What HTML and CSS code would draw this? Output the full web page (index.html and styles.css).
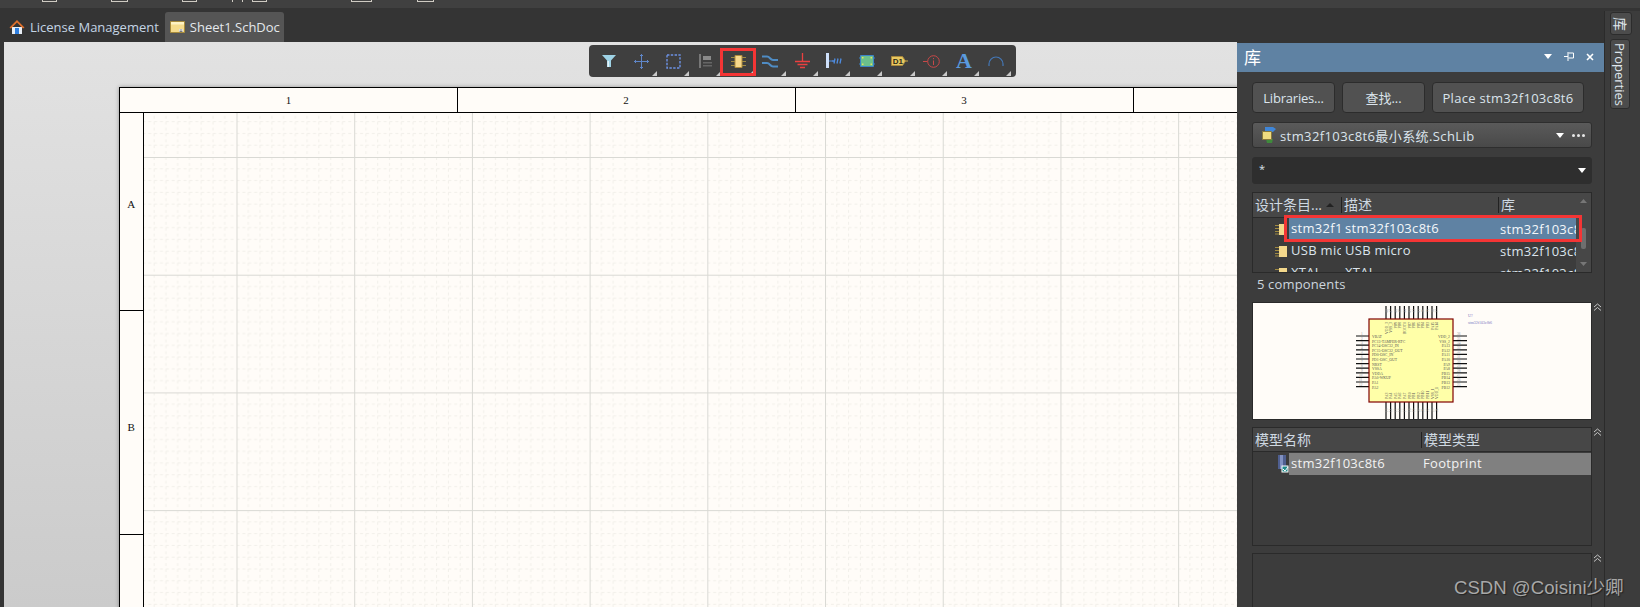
FILE: index.html
```html
<!DOCTYPE html>
<html>
<head>
  <title>Sheet1.SchDoc</title>
  <link rel="stylesheet" href="styles.css">
</head>
<body>
  <div class="topbar">
    <span class="stub stub-1"></span>
    <span class="stub stub-2"></span>
    <span class="stub stub-3"></span>
    <span class="stub stub-4"></span>
    <span class="stub stub-5"></span>
    <span class="stub stub-6"></span>
    <span class="stub stub-7"></span>
  </div>

  <div class="app">
    <div class="editor">
      <div class="tabs">
        <div class="tab">
          <svg class="tab-icon" width="16" height="16" viewBox="0 0 16 16">
            <path d="M3 8v7h10V8z" fill="#e8eef4"/>
            <path d="M6 9h4v6H6z" fill="#2f7fe0"/>
            <path d="M0.5 8.5 8 1l7.5 7.5-1.5 1L8 3.5 2 9.5z" fill="#e0702c"/>
          </svg>
          License Management
        </div>
        <div class="tab tab-active">
          <svg class="tab-icon" width="15" height="12" viewBox="0 0 15 12">
            <path d="M0.5 0.5h14v11H0.5z" fill="#f6dc8c" stroke="#a88b3c"/>
            <path d="M1 1h13v2.5H1z" fill="#fff3c4"/>
            <path d="M9 8h4v3H9z" fill="#fff"/>
            <path d="M9.5 9h3M9.5 10.5h3" stroke="#777"/>
          </svg>
          Sheet1.SchDoc
        </div>
      </div>

      <div class="canvas">
        <div class="toolbar">
          <div class="tool tool-plain">
            <svg width="14" height="12" viewBox="0 0 14 12"><path d="M0 0h14L9 5.5V12H5V5.5z" fill="#9fd3e6"/><path d="M5.5 6h1.5v6H5.5z" fill="#e4f4fa"/></svg>
          </div>
          <div class="tool">
            <svg width="15" height="15" viewBox="0 0 15 15"><path d="M7.5 0v15M0 7.5h15M6 1.5h3M6 13.5h3M1.5 6v3M13.5 6v3" stroke="#5f86c8" fill="none"/></svg>
          </div>
          <div class="tool">
            <svg width="15" height="15" viewBox="0 0 15 15"><rect x="1" y="1" width="13" height="13" fill="none" stroke="#6d93e6" stroke-width="1.4" stroke-dasharray="2.4 1.4"/></svg>
          </div>
          <div class="tool">
            <svg width="13" height="14" viewBox="0 0 13 14"><path d="M0 0h2v14H0z" fill="#777"/><path d="M4 2h8v4H4z" fill="#8a8a8a"/><path d="M4 8h9v1.5H4zM4 11h9v1.5H4z" fill="#666"/></svg>
          </div>
          <div class="tool tool-marked">
            <svg width="15" height="13" viewBox="0 0 15 13"><path d="M4 .5h7v12H4z" fill="#f8d98c" stroke="#b08c3c"/><path d="M0 2.5h4M0 6.5h4M0 10.5h4M11 2.5h4M11 6.5h4M11 10.5h4" stroke="#a08a40"/></svg>
          </div>
          <div class="tool">
            <svg width="17" height="13" viewBox="0 0 17 13"><path d="M0 1.5h5c3 0 3 3.5 6 3.5h5M0 8h5c3 0 3 3.5 6 3.5h5" fill="none" stroke="#4f8cc4" stroke-width="2"/></svg>
          </div>
          <div class="tool">
            <svg width="15" height="16" viewBox="0 0 15 16"><path d="M7.5 0v8M0 8.5h15M2.5 11.5h10M5 14.5h5" stroke="#ec4040" fill="none" stroke-width="1.3"/></svg>
          </div>
          <div class="tool">
            <svg width="17" height="16" viewBox="0 0 17 16"><path d="M0 0h3v15H0z" fill="#cfe0fa"/><path d="M3 8h3" stroke="#4f8ce0"/><path d="M8 10.5 9 5.5M11 10.5 12 5.5M14 10.5 15 5.5M6 8h2" stroke="#4f8ce0" stroke-width="1.3" fill="none"/></svg>
          </div>
          <div class="tool">
            <svg width="16" height="12" viewBox="0 0 16 12"><path d="M1.5 .5h13v11h-13z" fill="#6cc08c" stroke="#3c84c8"/><path d="M3 2h1.5v1.5H3zM3 8.5h1.5V10H3zM11.5 2H13v1.5h-1.5zM11.5 8.5H13V10h-1.5z" fill="#e8e060"/><path d="M0 3h1.5M0 9h1.5M14.5 3H16M14.5 9H16" stroke="#3c84c8"/></svg>
          </div>
          <div class="tool">
            <svg width="17" height="10" viewBox="0 0 17 10"><path d="M.5.5h11l3 4.5-3 4.5H.5z" fill="#e8c860" stroke="#a8883c"/><path d="M14.5 5H17" stroke="#c8a848"/><text x="1.8" y="8" class="tag-text">D1</text></svg>
          </div>
          <div class="tool">
            <svg width="17" height="13" viewBox="0 0 17 13"><circle cx="10.5" cy="6.5" r="5.8" fill="none" stroke="#c84848"/><path d="M0 6.5h4.5M10.5 5.5v4.5M10.5 3v1.2" stroke="#c84848" fill="none"/></svg>
          </div>
          <div class="tool"><span class="tool-letter">A</span></div>
          <div class="tool">
            <svg width="16" height="10" viewBox="0 0 16 10"><path d="M1 10V8a7 7 0 0 1 14 0v2" fill="none" stroke="#4478b8" stroke-width="1.2"/></svg>
          </div>
        </div>

        <div class="sheet">
          <div class="sheet-cols">
            <div class="sheet-col">1</div>
            <div class="sheet-col">2</div>
            <div class="sheet-col">3</div>
            <div class="sheet-col"></div>
          </div>
          <div class="sheet-body">
            <div class="sheet-rows">
              <div class="sheet-row row-a">A</div>
              <div class="sheet-row row-b">B</div>
              <div class="sheet-row"></div>
            </div>
            <div class="sheet-area">
              <svg class="sheet-grid" width="100%" height="100%">
                <defs>
                  <pattern id="grid" width="118" height="118" patternUnits="userSpaceOnUse" patternTransform="translate(92.5 44) scale(.9975)">
                    <path d="M0 11.8H118M0 23.6H118M0 35.4H118M0 47.2H118M0 59H118M0 70.8H118M0 82.6H118M0 94.4H118M0 106.2H118M11.8 0V118M23.6 0V118M35.4 0V118M47.2 0V118M59 0V118M70.8 0V118M82.6 0V118M94.4 0V118M106.2 0V118" stroke="#f1efe9" stroke-dasharray="3 2.9" fill="none"/>
                    <path d="M0 .5H118M.5 0V118" stroke="#d9d9d4" fill="none"/>
                  </pattern>
                </defs>
                <rect width="100%" height="100%" fill="url(#grid)"/>
              </svg>
            </div>
          </div>
        </div>
      </div>
    </div>

    <div class="panel">
      <div class="panel-title">
        <span class="panel-name">库</span>
        <span class="panel-controls">
          <svg width="8" height="5" viewBox="0 0 8 5"><path d="M0 0h8L4 5z" fill="#fff"/></svg>
          <svg width="10" height="9" viewBox="0 0 10 9"><path d="M0 4.5h4M4.5 1h5v5h-5M4 0v9" stroke="#fff" fill="none"/></svg>
          <svg width="8" height="8" viewBox="0 0 8 8"><path d="M1 1l6 6M7 1 1 7" stroke="#fff" stroke-width="1.6"/></svg>
        </span>
      </div>

      <div class="panel-body">
        <div class="btn-row">
          <div class="btn btn-small btn-libs">Libraries...</div>
          <div class="btn btn-small">查找...</div>
          <div class="btn btn-wide">Place stm32f103c8t6</div>
        </div>

        <div class="select select-lib">
          <svg class="select-icon" width="14" height="16" viewBox="0 0 14 16">
            <path d="M3 0h8l3 2-3 3H3z" fill="#3f86d8"/>
            <path d="M4 12h7l-1 4H5z" fill="#3f8a3c"/>
            <path d="M.5 4.5h9v8h-9z" fill="#f0dc80" stroke="#8a7a3c"/>
          </svg>
          <span class="select-text">stm32f103c8t6最小系统.SchLib</span>
          <svg class="select-arrow" width="8" height="5" viewBox="0 0 8 5"><path d="M0 0h8L4 5z" fill="#fff"/></svg>
          <span class="select-dots"><i></i><i></i><i></i></span>
        </div>

        <div class="select select-filter">
          <span class="select-text filter-star">*</span>
          <svg class="select-arrow" width="8" height="5" viewBox="0 0 8 5"><path d="M0 0h8L4 5z" fill="#fff"/></svg>
        </div>

        <div class="list list-lib">
          <div class="list-main">
            <div class="list-head head-lib">
              <div class="head-cell">设计条目...<svg class="sort" width="8" height="4" viewBox="0 0 8 4"><path d="M4 0l4 4H0z" fill="#222"/></svg></div>
              <div class="head-cell">描述</div>
              <div class="head-cell">库</div>
            </div>
            <div class="list-row">
              <svg class="comp-icon" width="12" height="11" viewBox="0 0 12 11"><path d="M4 0h8v11H4z" fill="#f3d88c"/><path d="M0 1.5h4M0 4.5h4M0 7.5h4M0 10h4" stroke="#a08a40"/></svg>
              <div class="row-cells cells-lib row-selected">
                <div class="cell">stm32f103c8t6</div>
                <div class="cell cell-desc">stm32f103c8t6</div>
                <div class="cell">stm32f103c8t6最小系统.SchLib</div>
              </div>
            </div>
            <div class="list-row">
              <svg class="comp-icon" width="12" height="11" viewBox="0 0 12 11"><path d="M4 0h8v11H4z" fill="#f3d88c"/><path d="M0 1.5h4M0 4.5h4M0 7.5h4M0 10h4" stroke="#a08a40"/></svg>
              <div class="row-cells cells-lib">
                <div class="cell">USB micro</div>
                <div class="cell cell-desc">USB micro</div>
                <div class="cell">stm32f103c8t6最小系统.SchLib</div>
              </div>
            </div>
            <div class="list-row">
              <svg class="comp-icon" width="12" height="11" viewBox="0 0 12 11"><path d="M4 0h8v11H4z" fill="#f3d88c"/><path d="M0 1.5h4M0 4.5h4M0 7.5h4M0 10h4" stroke="#a08a40"/></svg>
              <div class="row-cells cells-lib">
                <div class="cell">XTAL</div>
                <div class="cell cell-desc">XTAL</div>
                <div class="cell">stm32f103c8t6最小系统.SchLib</div>
              </div>
            </div>
          </div>
          <div class="scrollbar">
            <svg width="7" height="4" viewBox="0 0 7 4"><path d="M3.5 0 7 4H0z" fill="#777"/></svg>
            <div class="scroll-thumb"></div>
            <svg width="7" height="4" viewBox="0 0 7 4"><path d="M0 0h7L3.5 4z" fill="#777"/></svg>
          </div>
          <div class="mark-row"></div>
        </div>

        <div class="count">5 components</div>

        <div class="preview">
          <svg class="chevrons" width="9" height="8" viewBox="0 0 9 8"><path d="M1 4l3.5-3L8 4M1 7.5l3.5-3 3.5 3" fill="none" stroke="#c8c8c8"/></svg>
          <svg class="chip" width="338" height="116" viewBox="1 1 338 116">
            <path d="M104 34h13M104 38.6h13M104 43.2h13M104 47.8h13M104 52.4h13M104 57h13M104 61.6h13M104 66.2h13M104 70.8h13M104 75.4h13M104 80h13M104 84.6h13M201 34h14M201 38.6h14M201 43.2h14M201 47.8h14M201 52.4h14M201 57h14M201 61.6h14M201 66.2h14M201 70.8h14M201 75.4h14M201 80h14M201 84.6h14" stroke="#111" stroke-width="1.2"/>
            <path d="M134 4v13M138.6 4v13M143.2 4v13M147.8 4v13M152.4 4v13M157 4v13M161.6 4v13M166.2 4v13M170.8 4v13M175.4 4v13M180 4v13M184.6 4v13M134 100v18M138.6 100v18M143.2 100v18M147.8 100v18M152.4 100v18M157 100v18M161.6 100v18M166.2 100v18M170.8 100v18M175.4 100v18M180 100v18M184.6 100v18" stroke="#111" stroke-width="1.2"/>
            <rect x="117" y="17" width="84" height="83" fill="#ffffa8" stroke="#800000" stroke-width="1.2"/>
            <g class="pin-name">
              <text x="120" y="36">VBAT</text><text x="120" y="40.6">PC13-TAMPER-RTC</text><text x="120" y="45.2">PC14-OSC32_IN</text><text x="120" y="49.8">PC15-OSC32_OUT</text><text x="120" y="54.4">PD0-OSC_IN</text><text x="120" y="59">PD1-OSC_OUT</text><text x="120" y="63.6">NRST</text><text x="120" y="68.2">VSSA</text><text x="120" y="72.8">VDDA</text><text x="120" y="77.4">PA0-WKUP</text><text x="120" y="82">PA1</text><text x="120" y="86.6">PA2</text>
            </g>
            <g class="pin-name pin-end">
              <text x="198" y="36">VDD_2</text><text x="198" y="40.6">VSS_2</text><text x="198" y="45.2">PA13</text><text x="198" y="49.8">PA12</text><text x="198" y="54.4">PA11</text><text x="198" y="59">PA10</text><text x="198" y="63.6">PA9</text><text x="198" y="68.2">PA8</text><text x="198" y="72.8">PB15</text><text x="198" y="77.4">PB14</text><text x="198" y="82">PB13</text><text x="198" y="86.6">PB12</text>
            </g>
            <g class="pin-name pin-end" transform="rotate(-90)">
              <text x="-20" y="135.5">VDD_3</text><text x="-20" y="140.1">VSS_3</text><text x="-20" y="144.7">PB9</text><text x="-20" y="149.3">PB8</text><text x="-20" y="153.9">BOOT0</text><text x="-20" y="158.5">PB7</text><text x="-20" y="163.1">PB6</text><text x="-20" y="167.7">PB5</text><text x="-20" y="172.3">PB4</text><text x="-20" y="176.9">PB3</text><text x="-20" y="181.5">PA15</text><text x="-20" y="186.1">PA14</text>
            </g>
            <g class="pin-name" transform="rotate(-90)">
              <text x="-97" y="135.5">PA3</text><text x="-97" y="140.1">PA4</text><text x="-97" y="144.7">PA5</text><text x="-97" y="149.3">PA6</text><text x="-97" y="153.9">PA7</text><text x="-97" y="158.5">PB0</text><text x="-97" y="163.1">PB1</text><text x="-97" y="167.7">PB2</text><text x="-97" y="172.3">PB10</text><text x="-97" y="176.9">PB11</text><text x="-97" y="181.5">VSS_1</text><text x="-97" y="186.1">VDD_1</text>
            </g>
            <g class="pin-num pin-end" transform="rotate(-90)">
              <text x="-7" y="135.5">48</text><text x="-7" y="140.1">47</text><text x="-7" y="144.7">46</text><text x="-7" y="149.3">45</text><text x="-7" y="153.9">44</text><text x="-7" y="158.5">43</text><text x="-7" y="163.1">42</text><text x="-7" y="167.7">41</text><text x="-7" y="172.3">40</text><text x="-7" y="176.9">39</text><text x="-7" y="181.5">38</text><text x="-7" y="186.1">37</text>
            </g>
            <g class="pin-num" transform="rotate(-90)">
              <text x="-110" y="135.5">13</text><text x="-110" y="140.1">14</text><text x="-110" y="144.7">15</text><text x="-110" y="149.3">16</text><text x="-110" y="153.9">17</text><text x="-110" y="158.5">18</text><text x="-110" y="163.1">19</text><text x="-110" y="167.7">20</text><text x="-110" y="172.3">21</text><text x="-110" y="176.9">22</text><text x="-110" y="181.5">23</text><text x="-110" y="186.1">24</text>
            </g>
            <g class="pin-num">
              <text x="109" y="33">1</text><text x="109" y="37.6">2</text><text x="109" y="42.2">3</text><text x="109" y="46.8">4</text><text x="109" y="51.4">5</text><text x="109" y="56">6</text><text x="109" y="60.6">7</text><text x="109" y="65.2">8</text><text x="109" y="69.8">9</text><text x="107" y="74.4">10</text><text x="107" y="79">11</text><text x="107" y="83.6">12</text>
            </g>
            <g class="pin-num">
              <text x="205" y="33">36</text><text x="205" y="37.6">35</text><text x="205" y="42.2">34</text><text x="205" y="46.8">33</text><text x="205" y="51.4">32</text><text x="205" y="56">31</text><text x="205" y="60.6">30</text><text x="205" y="65.2">29</text><text x="205" y="69.8">28</text><text x="205" y="74.4">27</text><text x="205" y="79">26</text><text x="205" y="83.6">25</text>
            </g>
            <g class="chip-ref">
              <text x="216" y="15">U?</text>
              <text x="216" y="22">stm32f103c8t6</text>
            </g>
          </svg>
        </div>

        <div class="list list-model">
          <svg class="chevrons" width="9" height="8" viewBox="0 0 9 8"><path d="M1 4l3.5-3L8 4M1 7.5l3.5-3 3.5 3" fill="none" stroke="#c8c8c8"/></svg>
          <div class="list-main">
            <div class="list-head head-model">
              <div class="head-cell">模型名称</div>
              <div class="head-cell">模型类型</div>
            </div>
            <div class="list-row list-row-model">
              <svg class="model-icon" width="12" height="18" viewBox="0 0 12 18">
                <path d="M1 0h8v14H1z" fill="#4f5f90"/>
                <path d="M3 0h3v14H3z" fill="#8090c0"/>
                <path d="M4.5 10.5h7v7h-7z" fill="#fff"/>
                <path d="M5.5 11.5h5v5h-5z" fill="#1f8a8a"/>
                <path d="M6 14l2 2 3-4" stroke="#fff" fill="none"/>
              </svg>
              <div class="row-cells cells-model row-active">
                <div class="cell">stm32f103c8t6</div>
                <div class="cell">Footprint</div>
              </div>
            </div>
          </div>
        </div>

        <div class="list list-last">
          <svg class="chevrons" width="9" height="8" viewBox="0 0 9 8"><path d="M1 4l3.5-3L8 4M1 7.5l3.5-3 3.5 3" fill="none" stroke="#c8c8c8"/></svg>
        </div>
      </div>
    </div>

    <div class="dock">
      <div class="dock-btn dock-lib">库</div>
      <div class="dock-btn dock-props">Properties</div>
    </div>
  </div>

  <div class="watermark">CSDN @Coisini少卿</div>
</body>
</html>
```

FILE: styles.css
```css
* {
  box-sizing: border-box;
}

html, body {
  height: 100%;
}

body {
  margin: 0;
  overflow: hidden;
  background: #343434;
  font-family: "Open Sans", "Noto Sans CJK SC", sans-serif;
  font-size: 13px;
  color: #dbe4ec;
  display: flex;
  flex-direction: column;
}

/* top strip, only the bottom edge of the icons is left in view */
.topbar {
  height: 8px;
  background: #404040;
  display: flex;
  flex-shrink: 0;
}

.stub {
  height: 2px;
  border: 1px solid #cfcbc3;
  border-top: none;
}
.stub-1 { width: 15px; margin-left: 42px; }
.stub-2 { width: 17px; margin-left: 54px; }
.stub-3 { width: 15px; margin-left: 54px; }
.stub-4 { width: 11px; margin-left: 35px; border-bottom: none; }
.stub-5 { width: 15px; margin-left: 9px; }
.stub-6 { width: 21px; margin-left: 84px; }
.stub-7 { width: 17px; margin-left: 45px; }

.app {
  flex: 1;
  min-height: 0;
  display: flex;
}

.editor {
  flex: 1;
  min-width: 0;
  display: flex;
  flex-direction: column;
}

/* document tabs */
.tabs {
  height: 34px;
  flex-shrink: 0;
  padding-top: 4px;
  display: flex;
  background: #343434;
}

.tab {
  height: 30px;
  display: flex;
  align-items: center;
  padding: 0 6px 0 9px;
  color: #c4d4e4;
  white-space: nowrap;
}

.tab-icon {
  margin-right: 5px;
}

.tab-active {
  margin-left: 0;
  padding: 0 4px 0 5px;
  background: #555;
  border-radius: 3px 3px 0 0;
  color: #e4e8ec;
}

/* schematic canvas */
.canvas {
  flex: 1;
  min-height: 0;
  margin-left: 4px;
  position: relative;
  overflow: hidden;
  background: linear-gradient(#e2e2e2, #cbcbcb);
}

.toolbar {
  position: absolute;
  left: 585px;
  top: 3px;
  z-index: 2;
  width: 427px;
  height: 32px;
  padding: 0 4px;
  display: flex;
  background: #3f3f3f;
  border-radius: 4px;
}

.tool {
  width: 32.25px;
  flex-shrink: 0;
  display: flex;
  align-items: center;
  justify-content: center;
  position: relative;
}

.tool::after {
  content: "";
  position: absolute;
  right: 1px;
  bottom: 1px;
  border-style: solid;
  border-width: 0 0 5px 5px;
  border-color: transparent transparent #c8c8c8 transparent;
}

.tool-plain::after {
  display: none;
}

.tool-marked::before {
  content: "";
  position: absolute;
  left: -2px;
  right: -2px;
  top: 3px;
  bottom: 1px;
  border: 3px solid #f43535;
  z-index: 1;
}

.tool-letter {
  font-family: "Liberation Serif", serif;
  font-weight: bold;
  font-size: 22px;
  line-height: 1;
  color: #5a9ade;
}

.tag-text {
  font-family: "Liberation Sans", sans-serif;
  font-weight: bold;
  font-size: 8px;
  fill: #2a2a1a;
}

.sheet {
  width: 1300px;
  margin: 45px 0 0 115px;
  background: #fffcf8;
  border: solid #000;
  border-width: 1.5px 0 0 1.5px;
  box-shadow: 0 0 4px rgba(0, 0, 0, 0.35);
  font-family: "Liberation Serif", serif;
  font-size: 11px;
  color: #111;
}

.sheet-cols {
  height: 24px;
  display: flex;
}

.sheet-col {
  width: 338px;
  flex-shrink: 0;
  display: flex;
  align-items: center;
  justify-content: center;
  padding-right: 1px;
  border-right: 1px solid #000;
}

.sheet-col:first-child {
  width: 338px;
  padding-right: 0;
}

.sheet-body {
  display: flex;
  border-top: 1.5px solid #000;
}

.sheet-rows {
  width: 23.5px;
  flex-shrink: 0;
  border-right: 1.5px solid #000;
}

.sheet-row {
  height: 224px;
  display: flex;
  align-items: center;
  justify-content: center;
  border-bottom: 1px solid #000;
}

.row-a {
  height: 198px;
  padding-bottom: 15px;
}

.row-b {
  padding-top: 9px;
}

.sheet-area {
  flex: 1;
  min-height: 500px;
}

.sheet-grid {
  display: block;
}

/* library panel */
.panel {
  width: 367px;
  flex-shrink: 0;
  margin-top: 35px;
  background: #3c3c3c;
  display: flex;
  flex-direction: column;
}

.panel-title {
  height: 29px;
  flex-shrink: 0;
  padding: 0 10px 2px 7px;
  display: flex;
  align-items: center;
  justify-content: space-between;
  background: #5f82a3;
  color: #fff;
  font-size: 17px;
}

.panel-controls {
  display: flex;
  align-items: center;
  gap: 12px;
}

.panel-body {
  padding: 10px 12px 0 15px;
  display: flex;
  flex-direction: column;
}

.btn-row {
  display: flex;
  gap: 7px;
  margin-bottom: 9px;
}

.btn {
  height: 31px;
  display: flex;
  align-items: center;
  justify-content: center;
  background: #515151;
  border: 1px solid #2c2c2c;
  border-radius: 4px;
  white-space: nowrap;
}

.btn-small {
  width: 83px;
}

.btn-libs {
  letter-spacing: -0.2px;
}

.btn-wide {
  width: 152px;
  letter-spacing: 0.3px;
}

.select {
  display: flex;
  align-items: center;
  border: 1px solid #2e2e2e;
  border-radius: 3px;
}

.select-lib {
  height: 26px;
  margin-bottom: 9px;
  padding: 0 6px 0 9px;
  background: linear-gradient(#5a5a5a, #494949);
}

.select-icon {
  margin-right: 4px;
}

.select-text {
  flex: 1;
  white-space: nowrap;
  letter-spacing: 0.4px;
}

.select-arrow {
  flex-shrink: 0;
}

.select-dots {
  display: flex;
  gap: 2px;
  margin-left: 8px;
}

.select-dots i {
  width: 3px;
  height: 3px;
  border-radius: 50%;
  background: #e8e8e8;
}

.select-filter {
  height: 27px;
  margin-bottom: 8px;
  padding: 0 5px 0 6px;
  background: #2e2e2e;
}

.filter-star {
  margin-top: -4px;
  font-size: 11px;
}

/* list tables */
.list {
  position: relative;
  border: 1px solid #2a2a2a;
  background: #3c3c3c;
}

.list-lib {
  height: 81px;
  display: flex;
  overflow: hidden;
}

.list-main {
  flex: 1;
  min-width: 0;
}

.list-head {
  height: 25px;
  display: grid;
  align-items: center;
  background: #474747;
  border-bottom: 1px solid #2a2a2a;
  color: #cfd9e2;
  font-size: 14px;
}

.head-lib {
  grid-template-columns: 88px 157px 1fr;
}

.head-model {
  height: 24px;
  grid-template-columns: 168px 1fr;
}

.head-cell {
  height: 16px;
  line-height: 16px;
  padding-left: 2px;
  white-space: nowrap;
  display: flex;
  align-items: center;
  justify-content: flex-start;
  border-left: 1px solid #222;
}

.head-cell:first-child {
  border-left: none;
}

.sort {
  margin-left: 4px;
}

.list-row {
  height: 22px;
  display: flex;
  align-items: center;
}

.comp-icon {
  width: 36px;
  padding-left: 20px;
  flex-shrink: 0;
  overflow: visible;
}

.row-cells {
  flex: 1;
  min-width: 0;
  height: 100%;
  display: grid;
  align-items: center;
}

.cells-lib {
  grid-template-columns: 52px 157px 1fr;
}

.cells-model {
  grid-template-columns: 132px 1fr;
}

.cell {
  padding: 0 0 2px 2px;
  white-space: nowrap;
  overflow: hidden;
  letter-spacing: 0.3px;
}

.cell-desc {
  padding-left: 4px;
}

.row-selected {
  background: #5f82a3;
  color: #f4f7fa;
}

.row-active {
  background: #808080;
  color: #f2f2f2;
}

.scrollbar {
  width: 15px;
  flex-shrink: 0;
  background: #474747;
  display: flex;
  flex-direction: column;
  align-items: center;
  padding: 6px 0 6px;
}

.scrollbar svg {
  flex-shrink: 0;
}

.scroll-thumb {
  width: 5px;
  height: 21px;
  margin: 25px 0 auto;
  background: #6e6e6e;
  border-radius: 2px;
}

.mark-row {
  position: absolute;
  left: 31px;
  top: 22px;
  width: 298px;
  height: 27px;
  border: 3px solid #f43535;
}

.count {
  height: 29px;
  padding: 0 0 8px 5px;
  display: flex;
  align-items: center;
  color: #cdd6de;
  letter-spacing: 0.15px;
}

.preview {
  position: relative;
  height: 118px;
  margin-bottom: 7px;
  background: #fffcf8;
  border: 1px solid #2a2a2a;
}

.chip {
  display: block;
}

.pin-name text {
  font-family: "Liberation Serif", serif;
  font-size: 3.8px;
  fill: #555;
}

.pin-num text {
  font-family: "Liberation Serif", serif;
  font-size: 3.4px;
  fill: #9a9a9a;
}

.pin-end text {
  text-anchor: end;
}

.chip-ref text {
  font-family: "Liberation Serif", serif;
  font-size: 4px;
  fill: #7a78c0;
}

.chevrons {
  position: absolute;
  right: -11px;
  top: 0;
}

.list-model {
  height: 119px;
  margin-bottom: 7px;
}

.list-row-model {
  height: 22px;
  margin-top: 1px;
}

.model-icon {
  width: 36px;
  height: 18px;
  padding-left: 24px;
  flex-shrink: 0;
  overflow: visible;
}

.list-last {
  height: 70px;
}

/* right dock */
.dock {
  width: 36px;
  flex-shrink: 0;
  margin-top: 3px;
  padding: 1px 7px 0 5px;
  background: #3c3c3c;
  border-left: 1px solid #2b2b2b;
}

.dock-btn {
  display: flex;
  align-items: center;
  justify-content: center;
  margin-bottom: 4px;
  background: #4c4c4c;
  border: 1px solid #2c2c2c;
  border-radius: 3px;
  writing-mode: vertical-rl;
  white-space: nowrap;
  color: #dfe6ec;
}

.dock-lib {
  height: 23px;
  text-orientation: sideways;
  font-size: 14px;
}

.dock-props {
  height: 70px;
}

.watermark {
  position: absolute;
  left: 1454px;
  top: 572px;
  font-family: "Liberation Sans", "Noto Sans CJK SC", sans-serif;
  font-size: 18.6px;
  color: #a8a8a8;
  text-shadow: 1px 1px 1px #222;
  white-space: nowrap;
}
```
